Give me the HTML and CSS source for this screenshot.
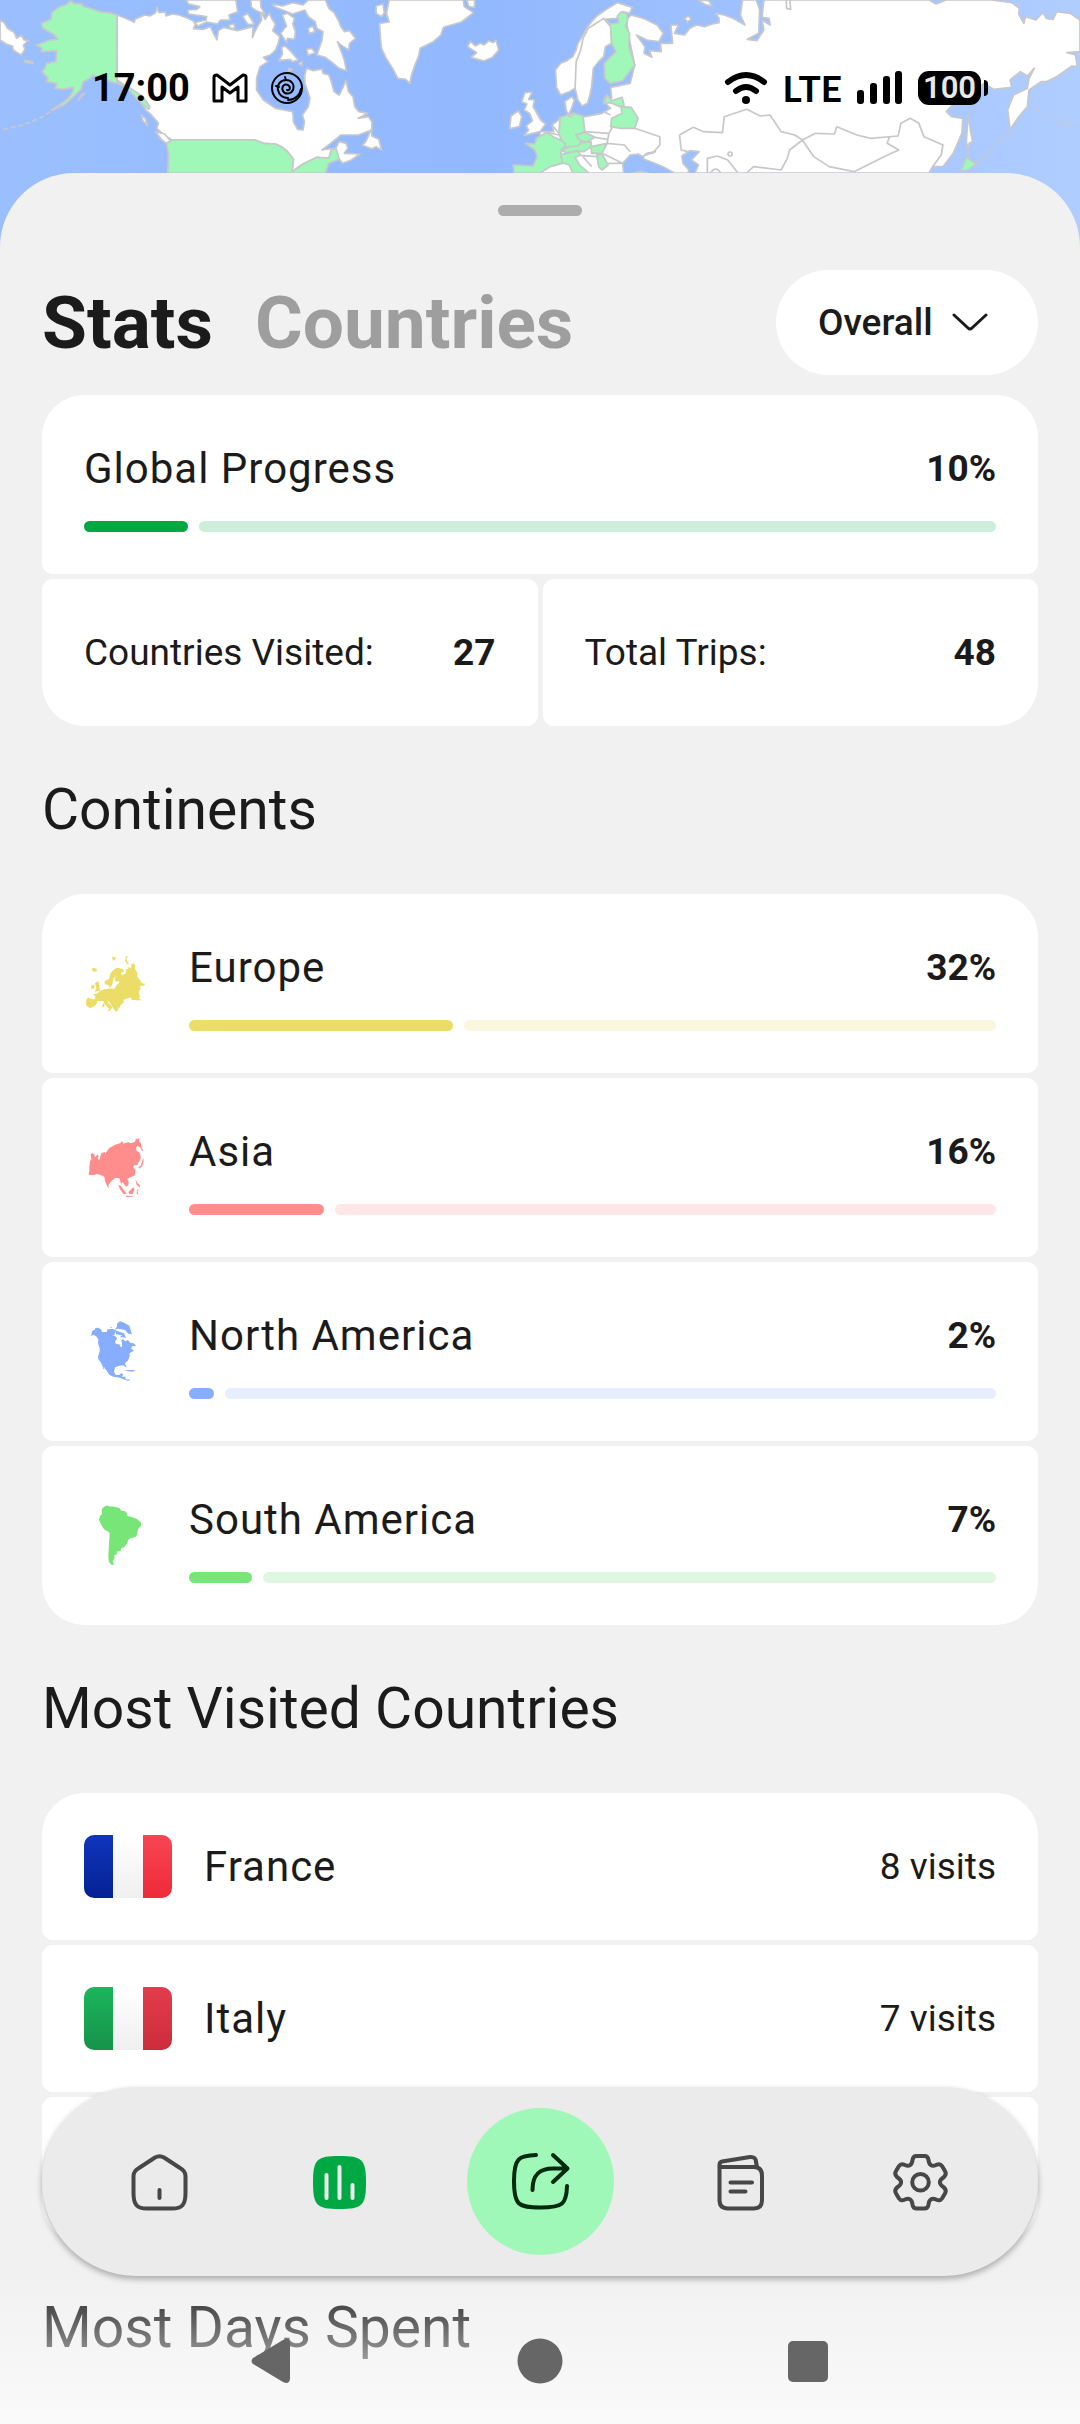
FILE: index.html
```html
<!DOCTYPE html>
<html lang="en">
<head>
<meta charset="utf-8">
<meta name="viewport" content="width=device-width, initial-scale=1">
<title>Travel Stats</title>
<link rel="stylesheet" href="styles.css">
</head>
<body>
<div class="app">
  <svg class="map" viewBox="0 0 3136 780" preserveAspectRatio="none" aria-hidden="true">
    <g class="land">
      <path d="M0 60L12 68L22 85L42 98L48 115L62 105L70 120L82 122L68 135L72 148L62 165L50 158L38 150L36 138L18 132L0 120Z"/>
      <path d="M340 45L365 55L390 67L392 58L420 45L435 48L452 38L456 22L462 38L480 36L482 48L500 42L520 45L545 55L560 62L568 72L562 86L590 88L612 80L615 90L630 120L634 92L650 82L690 92L712 86L735 80L733 112L740 95L750 75L760 60L755 30L770 58L782 40L790 58L800 72L792 92L812 110L808 130L800 150L785 165L765 172L778 185L755 200L745 235L745 270L765 300L800 325L850 335L852 365L864 388L880 390L884 365L878 345L895 320L900 295L885 250L885 225L890 205L910 212L935 207L938 220L955 225L962 245L970 275L985 285L998 258L1004 240L1012 275L1025 290L1030 320L1042 335L1068 340L1040 355L1070 350L1080 365L1080 390L1040 405L990 405L960 430L935 450L975 444L985 425L1005 430L1010 445L1000 460L1045 462L1020 480L995 490L985 478L955 476L920 472L880 492L848 515L852 478L835 455L820 442L800 432L765 430L740 420L500 420L480 408L455 385L460 370L440 345L425 332L400 295L370 262L340 240Z"/>
      <path d="M452 395L478 402L500 428L500 445L470 420ZM410 345L422 355L428 378L415 362Z"/>
      <path d="M1078 388L1080 408L1100 418L1108 450L1092 440L1080 446L1052 436L1062 425Z"/>
      <path d="M540 0L685 0L690 35L665 45L668 60L640 60L632 72L600 66L575 78L565 68L598 60L600 50L548 42L545 30L572 28L580 20L548 12Z"/>
      <path d="M728 0L756 0L758 22L770 42L745 32L730 22ZM705 50L718 40L728 55L738 72L720 74ZM665 75L680 72L682 84L668 85Z"/>
      <path d="M790 12L820 18L850 8L880 15L895 0L945 0L955 25L970 38L982 60L990 80L1000 95L1015 92L1032 115L1015 130L1012 150L990 135L980 125L1000 180L1006 212L985 205L965 188L945 172L920 165L935 120L938 95L920 85L915 65L895 50L885 30L850 42L800 22Z"/>
      <path d="M820 45L835 40L855 55L850 72L858 95L855 118L835 115L832 128L815 100L832 78ZM895 85L908 78L915 95L898 100ZM890 148L905 145L915 158L895 166Z"/>
      <path d="M818 142L828 138L845 155L866 180L850 185L842 178L810 182L820 162ZM838 205L848 208L840 215ZM868 190L878 185L876 198Z"/>
      <path d="M1130 0L1345 0L1348 20L1375 38L1340 66L1300 78L1288 82L1280 105L1258 125L1220 145L1215 170L1205 195L1195 225L1190 250L1178 238L1155 235L1140 205L1120 172L1108 145L1105 118L1102 70L1130 66L1122 40ZM1092 18L1112 12L1116 38L1108 50L1092 40ZM1355 0L1378 0L1378 22L1362 20Z"/>
      <path d="M1358 140L1366 124L1380 138L1395 130L1405 135L1420 122L1432 128L1440 120L1448 150L1430 172L1405 183L1368 172L1384 158Z"/>
      <path d="M1505 332L1515 350L1508 380L1480 386L1484 348ZM1524 278L1545 276L1535 298L1552 300L1548 320L1562 345L1570 360L1584 372L1568 395L1522 406L1535 390L1528 378L1546 362L1538 340L1522 330L1530 312L1515 305Z"/>
      <g transform="translate(1568 0)">
        <path d="M45 210L60 190L78 182L95 170L105 150L110 130L122 110L135 85L150 65L165 48L190 30L225 8L268 22L260 40L240 35L222 55L188 58L205 75L208 130L190 140L185 170L170 185L155 205L150 260L145 285L138 310L122 318L110 300L102 265L85 275L60 285L48 262ZM72 305L92 290L100 300L90 330L82 345L76 330Z"/>
        <path d="M250 60L265 45L300 55L340 75L358 100L345 125L310 120L280 105L305 140L302 160L325 172L318 152L352 155L350 130L385 130L380 75L402 75L390 100L420 105L435 85L455 75L478 80L500 72L520 68L520 55L510 40L535 45L560 55L595 75L582 45L588 0L628 0L638 30L635 100L602 118L630 122L650 90L645 60L668 75L665 55L645 52L650 0L1130 0L1150 12L1180 0L1310 0L1370 8L1392 25L1390 42L1405 70L1410 50L1440 60L1460 38L1470 55L1490 58L1500 35L1540 40L1568 60L1568 155L1530 158L1555 165L1560 200L1545 198L1500 230L1470 245L1455 245L1420 270L1415 320L1390 350L1365 388L1358 330L1375 285L1415 265L1420 235L1435 205L1415 228L1395 215L1365 240L1370 262L1318 268L1290 250L1250 275L1210 300L1180 335L1195 350L1228 355L1225 400L1200 460L1170 500L1140 500L1130 519L450 519L460 495L440 480L462 455L435 452L412 468L415 490L432 510L430 519L390 519L360 502L330 488L302 478L300 468L335 455L310 460L298 470L285 462L262 465L240 490L243 519L-75 519L-75 495L0 500L0 395L40 395L35 375L55 358L75 350L95 340L130 350L180 340L205 325L185 305L190 290L208 295L205 262L262 250L275 195L262 130Z"/>
        <path d="M420 55L432 48L438 58L428 66ZM460 0L490 2L500 18L480 14ZM715 0L725 0L728 28L716 25ZM1243 345L1250 390L1256 425L1246 430L1245 458L1238 425Z"/>
      </g>
    </g>
    <g class="visited">
      <path d="M340 45L318 38L290 35L270 28L240 18L238 12L215 10L205 2L192 14L170 22L150 38L148 58L120 70L125 85L158 105L168 118L145 120L132 125L105 135L122 145L120 155L165 152L162 185L135 190L130 205L122 215L140 235L135 245L165 250L160 265L185 268L212 262L212 275L198 295L182 308L150 330L185 316L215 288L235 268L242 245L262 235L270 225L300 238L345 252L375 262L415 290L435 320L432 328L405 305L372 268L340 245Z"/>
      <path d="M70 180L95 185L96 190L74 188ZM235 285L245 280L228 300Z"/>
      <path d="M500 420L740 420L765 430L800 432L820 442L835 455L852 478L848 515L880 492L920 472L955 474L962 448L976 446L985 478L955 490L945 519L487 519L490 465L483 430Z"/>
      <g transform="translate(1568 0)">
        <path d="M185 55L205 72L228 68L225 48L235 36L252 40L255 60L248 78L260 100L258 140L275 195L240 242L205 250L188 235L186 190L220 155L208 130L205 80Z"/>
        <path d="M58 352L80 345L90 350L98 340L125 348L130 395L105 405L120 425L110 440L68 442L55 400Z"/>
        <path d="M-42 430L-15 432L-10 415L20 397L38 410L60 420L75 432L60 460L65 490L30 500L0 519L-75 519L-78 495L-20 498L-8 470L-15 450Z"/>
        <path d="M60 450L85 440L110 438L120 428L148 425L150 440L128 455L95 455L80 460ZM105 405L130 397L160 412L135 426L115 420Z"/>
        <path d="M60 464L110 452L118 466L102 472L115 495L142 519L95 519L85 495L65 488ZM148 440L195 430L180 460L150 460ZM165 465L180 462L198 495L180 510L170 500Z"/>
        <path d="M185 310L195 285L208 302L238 292L244 315L232 320L205 308ZM205 380L208 355L238 340L235 320L265 322L285 355L275 385L235 385ZM1238 470L1265 492L1245 510L1218 514L1228 500ZM270 519L290 513L312 519Z"/>
      </g>
    </g>
    <g class="border" transform="translate(1568 0)">
      <path d="M102 265L105 185L118 150L125 115L140 85L160 72L185 55"/>
      <path d="M405 405L445 382L475 395L530 398L535 350L600 328L640 348L668 345L700 395L740 405L762 420L800 400L855 402L862 380L920 405L960 415L1040 408L1048 370L1075 355L1100 370L1115 410L1170 435L1165 465L1140 500M405 405L410 450L430 455M762 420L795 470L840 500L912 515L970 485L1020 460L1042 450L1008 430L1015 410M762 420L725 450L718 475L700 510L620 500L600 519M486 519V475L515 468L545 480L575 519M495 519Q510 495 525 519M546 462A6 6 0 1 0 558 462A6 6 0 1 0 546 462"/>
      <path d="M130 395L200 400L210 382M200 400L195 430L245 435L262 455M275 385L348 410L348 435L325 462M160 412L195 418M180 460L240 490M205 345L185 335M118 466L165 470M125 470L150 500M198 490H240M35 375L55 400M20 397L55 405"/>
      <path class="isles" d="M1265 492L1300 465L1340 420L1365 390M1440 330L1465 340M1505 368L1568 385"/>
    </g>
    <path class="isles" d="M10 388L70 374L120 352L150 332L185 314"/>
  </svg>

  <header class="status">
    <div class="status-group">
      <time class="clock">17:00</time>
      <svg class="mail" width="36" height="30" viewBox="0 0 36 30" aria-label="Mail"><path d="M2 4Q2 2 5 2L18 12L31 2Q34 2 34 4V28H26V14L18 20L10 14V28H2Z"/></svg>
      <svg class="swirl" width="34" height="34" viewBox="0 0 34 34" aria-label="Notification"><circle cx="17" cy="17" r="15"/><path d="M17 19C20 20 21 16 18 14C14 12 11 16 13 20C15 24 21 23 23 19C25 13 21 9 16 9C10 9 7 14 8 19C9 24 13 27 18 27M16 9L15 6M9 16L6 15M31 18C30 24 25 29 18 29"/></svg>
    </div>
    <div class="status-group status-right">
      <svg width="44" height="34" viewBox="0 0 44 34" aria-label="Wi-Fi"><g fill="none" stroke="#000" stroke-width="6" stroke-linecap="round"><path d="M4 11Q22 -3 40 11M12 20Q22 12 32 20"/></g><circle cx="22" cy="29" r="4"/></svg>
      <span class="network">LTE</span>
      <svg width="46" height="34" viewBox="0 0 46 34" aria-label="Signal"><rect x="0" y="19" width="7" height="14" rx="3"/><rect x="13" y="12" width="7" height="21" rx="3"/><rect x="26" y="5" width="7" height="28" rx="3"/><rect x="38" y="0" width="7" height="33" rx="3"/></svg>
      <div class="battery"><span class="level">100</span><span class="nub"></span></div>
    </div>
  </header>

  <main class="sheet">
    <div class="handle"></div>
    <div class="toolbar">
      <nav class="tabs">
        <button class="tab active" type="button">Stats</button>
        <button class="tab" type="button">Countries</button>
      </nav>
      <label class="filter">
        <select aria-label="Period"><option>Overall</option></select>
        <svg width="36" height="20" viewBox="0 0 36 20" aria-hidden="true"><path d="M2 2L16 15Q18 17 20 15L34 2"/></svg>
      </label>
    </div>

    <section class="cards">
      <div class="card">
        <div class="body">
          <div class="row"><span class="name">Global Progress</span><strong>10%</strong></div>
          <div class="bar green"><span class="fill" style="width:11.4%"></span><span class="track"></span></div>
        </div>
      </div>
      <div class="pair">
        <div class="card row"><span>Countries Visited:</span><strong>27</strong></div>
        <div class="card row"><span>Total Trips:</span><strong>48</strong></div>
      </div>
    </section>

    <h2>Continents</h2>
    <section class="cards">
      <div class="card">
        <svg class="shape" viewBox="72 96 189 189" fill="#ebdd68" aria-hidden="true"><path d="M78 250L79 240L85 232L92 236L104 238L106 230L100 222L112 220L120 213L135 207L140 208L150 205L162 207L170 195L178 188L176 182L168 186L164 178L168 168L160 176L158 190L152 203L144 195L134 192L134 184L148 176L150 162L160 150L170 143L185 146L192 150L190 157L183 158L186 166L198 160L197 148L204 148L205 142L214 144L213 134L220 130L226 138L225 148L232 158L232 170L240 180L246 190L256 191L252 197L240 197L242 206L236 215L240 230L236 234L244 241L228 241L215 239L212 232L200 236L190 240L192 247L182 255L178 265L173 262L175 270L168 276L158 262L150 250L142 240L144 248L157 261L150 272L142 272L148 266L134 253L130 243L112 243L110 252L100 260L90 265L80 258Z M105 190L115 182L118 198L120 212L103 215L109 206ZM93 198L103 193L103 206L94 206ZM96 143L110 146L110 155L98 154ZM156 112L167 110L166 118L159 123ZM199 108H203L199 118L207 133L201 132L195 121ZM127 252L133 250L133 262L128 262Z"/></svg>
        <div class="body">
          <div class="row"><span class="name">Europe</span><strong>32%</strong></div>
          <div class="bar yellow"><span class="fill" style="width:32.7%"></span><span class="track"></span></div>
        </div>
      </div>
      <div class="card">
        <svg class="shape" viewBox="72 648 189 189" fill="#ff8d8c" aria-hidden="true"><path d="M92 702L98 699L103 704L105 712L112 704L116 706L113 716L118 720L124 700L134 696L136 700L148 684L165 674L180 670L187 664L190 671L205 666L212 670L225 665L227 658L238 655L237 664L243 670L244 680L250 692L246 692L240 682L232 678L228 684L230 693L238 697L242 708L242 716L236 726L232 735L223 736L220 742L226 750L225 766L212 772L202 776L206 786L205 796L198 800L192 792L186 786L184 794L178 775L166 773L158 780L150 788L145 796L147 804L142 800L135 782L133 770L120 764L112 762L102 765L86 765L88 752L88 740L90 725L94 716ZM250 714L251 722L247 738L238 746L235 742L242 737L246 725ZM175 794L182 797L190 808L200 822L190 822L180 808ZM196 827L225 828L200 832ZM205 816L220 802L224 808L218 822L208 822ZM226 778L233 790L240 796L239 803L230 794ZM231 809L238 808L232 814L235 823L230 822Z"/></svg>
        <div class="body">
          <div class="row"><span class="name">Asia</span><strong>16%</strong></div>
          <div class="bar red"><span class="fill" style="width:16.7%"></span><span class="track"></span></div>
        </div>
      </div>
      <div class="card">
        <svg class="shape" viewBox="72 120 189 189" fill="#87adff" aria-hidden="true"><path d="M89 169L94 165L96 154L104 149L106 144L115 143L124 149L126 156L138 156L150 163L164 168L170 172L170 178L165 185L168 192L178 193L182 201L186 202L186 190L184 180L190 178L196 184L204 180L210 188L220 190L229 197L216 199L214 206L222 212L208 220L209 227L205 240L195 250L200 264L195 260L190 256L178 257L165 262L162 275L167 285L178 285L183 280L190 282L186 290L197 290L196 298L212 299L205 303L190 298L180 293L160 290L148 284L140 272L130 258L134 270L138 274L130 266L124 250L115 238L114 230L119 214L119 205L114 190L115 178L108 168L100 165ZM165 150L178 155L192 160L198 175L190 172L180 172L186 166L168 163ZM172 130L180 124L192 128L208 137L216 163L205 161L195 150L185 148L174 146L163 149L170 142ZM142 148L160 147L166 152L163 166L152 164L140 158ZM150 140L156 141L154 145ZM192 271L210 270L228 271L218 275L205 274Z"/></svg>
        <div class="body">
          <div class="row"><span class="name">North America</span><strong>2%</strong></div>
          <div class="bar blue"><span class="fill" style="width:3.1%"></span><span class="track"></span></div>
        </div>
      </div>
      <div class="card">
        <svg class="shape" viewBox="72 672 189 189" fill="#78e578" aria-hidden="true"><path d="M125 688L132 680L142 676L145 679L165 680L178 684L184 692L196 694L202 702L201 708L212 710L230 716L243 728L243 737L234 748L231 765L225 772L212 774L204 780L202 790L192 802L184 804L182 812L170 815L171 822L163 826L164 836L158 842L160 850L165 854L154 854L147 846L145 830L146 810L147 790L149 760L146 756L132 748L124 735L117 720L120 708L126 702Z"/></svg>
        <div class="body">
          <div class="row"><span class="name">South America</span><strong>7%</strong></div>
          <div class="bar lime"><span class="fill" style="width:7.8%"></span><span class="track"></span></div>
        </div>
      </div>
    </section>

    <h2>Most Visited Countries</h2>
    <section class="cards">
      <div class="card flagged">
        <span class="flag"><i class="navy"></i><i class="white"></i><i class="crimson"></i></span>
        <div class="row body"><span class="name">France</span><span>8 visits</span></div>
      </div>
      <div class="card flagged">
        <span class="flag"><i class="emerald"></i><i class="white"></i><i class="brick"></i></span>
        <div class="row body"><span class="name">Italy</span><span>7 visits</span></div>
      </div>
      <div class="card flagged"><div class="row body"></div></div>
    </section>

    <h2>Most Days Spent</h2>
  </main>

  <div class="scrim"></div>
  <nav class="dock">
    <button type="button" aria-label="Home"><svg viewBox="0 0 63 63"><path d="M27 7.500Q31.500 5 36 7.500L52 18Q57.500 21 57.500 26V43C57.500 55 54 58.500 44 58.500H19C9 58.500 5.500 55 5.500 43V26Q5.500 21 11 18ZM31.500 40V48"/></svg></button>
    <button type="button" aria-label="Stats"><svg viewBox="0 0 63 63"><path class="solid" d="M31.500 6C54 6 58 9 58 32.500C58 56 54 59 31.500 59C9 59 5 56 5 32.500C5 9 9 6 31.500 6Z"/><path class="cut" d="M18.500 25V48M31.500 17V48M44.500 35V48"/></svg></button>
    <button class="share" type="button" aria-label="Share"><svg viewBox="0 0 63 63"><path d="M27 5C10 5.500 5 8 5 31C5 55 9 57.500 31.500 57.500C54 57.500 57.500 54 58 36M44 5L58.500 18.500L44 32M58 18.500H44C30 18.500 23.500 25 23.500 40"/></svg></button>
    <button type="button" aria-label="Trips"><svg viewBox="0 0 63 63"><path d="M10.500 17H45Q53 17 53 26V50Q53 58.500 45 58.500H19Q10.500 58.500 10.500 50V15Q10.500 12 13 11.500L41 7Q47 6.500 47 12L48 17M21.500 32.500H43M21.500 41.500H36.500"/></svg></button>
    <button type="button" aria-label="Settings"><svg viewBox="0 0 63 63"><circle cx="31.500" cy="32.300" r="8.300"/><path d="M27.500 6H35.500Q39 6 39.500 10C40 15 43 17 47 15Q51 13 53 16L56 21Q58 24 55 27C49.500 30.500 49.500 34 55 37.500Q58 40.500 56 43.500L53 48.500Q51 51.500 47 49.500C43 47.500 40 49.500 39.500 54.500Q39 58.500 35.500 58.500H27.500Q24 58.500 23.500 54.500C23 49.500 20 47.500 16 49.500Q12 51.500 10 48.500L7 43.500Q5 40.500 8 37.500C13.500 34 13.500 30.500 8 27Q5 24 7 21L10 16Q12 13 16 15C20 17 23 15 23.500 10Q24 6 27.500 6Z"/></svg></button>
  </nav>
  <nav class="system">
    <button type="button" aria-label="Back"><svg viewBox="0 0 46 46"><path d="M4 20Q1 23 4 26L34 44Q40 47 41 41V5Q40 -1 34 2Z"/></svg></button>
    <button type="button" aria-label="Home screen"><svg viewBox="0 0 46 46"><circle cx="23" cy="23" r="22.500"/></svg></button>
    <button type="button" aria-label="Recent apps"><svg viewBox="0 0 46 46"><rect x="3" y="3" width="40" height="41" rx="5"/></svg></button>
  </nav>
</div>
</body>
</html>
```

FILE: styles.css
```css
* {
  box-sizing: border-box;
}

body {
  margin: 0;
  font-family: Roboto, "Noto Sans", sans-serif;
  color: #1c1b1b;
  background: #f1f1f1;
}

button,
select {
  margin: 0;
  padding: 0;
  border: 0;
  background: none;
  font: inherit;
  color: inherit;
}

svg {
  display: block;
  flex: none;
}

.app {
  position: relative;
  height: 100vh;
  overflow: hidden;
  background: linear-gradient(90deg, #9bbffe, #92b8fe 45%, #b0cdff);
}

/* World map behind the status bar */
.map {
  position: absolute;
  top: 0;
  left: 0;
  width: 100%;
  height: 260px;
}

.map path {
  stroke: #c6c8cb;
  stroke-width: 5;
  stroke-linejoin: round;
}

.land {
  fill: #fff;
}

.visited {
  fill: #9ff7b8;
}

.border,
.map .isles {
  fill: none;
}

.map .isles {
  stroke-dasharray: 14 8;
}

.status {
  position: relative;
  display: flex;
  justify-content: space-between;
  align-items: flex-start;
  height: 173px;
  padding: 66px 92px 0;
  color: #000;
}

.status-group {
  display: flex;
  align-items: center;
  height: 44px;
  gap: 22px;
}

.status-right {
  gap: 15px;
}

.clock {
  font-size: 38px;
  font-weight: 700;
  line-height: 42px;
}

.mail,
.swirl {
  fill: none;
  stroke: #000;
  stroke-width: 3;
  stroke-linejoin: round;
  stroke-linecap: round;
}

.swirl {
  stroke-width: 2;
}

.network {
  font-family: Lato, Roboto, sans-serif;
  font-size: 37px;
  font-weight: 700;
  line-height: 44px;
}

.battery {
  display: flex;
  align-items: center;
  gap: 3px;
}

.level {
  width: 63px;
  border-radius: 11px;
  background: #000;
  color: #e8e8e8;
  font-size: 31px;
  font-weight: 600;
  line-height: 34px;
  text-align: center;
}

.nub {
  width: 4px;
  height: 16px;
  border-radius: 0 4px 4px 0;
  background: #000;
}

/* Bottom sheet */
.sheet {
  position: relative;
  min-height: 100%;
  padding: 32px 42px 0;
  border-radius: 74px 74px 0 0;
  background: #f1f1f1;
  font-size: 37px;
}

.handle {
  width: 84px;
  height: 11px;
  margin: 0 auto 54px;
  border-radius: 6px;
  background: #adadad;
}

.toolbar {
  display: flex;
  justify-content: space-between;
  align-items: center;
  margin-bottom: 20px;
}

.tabs {
  display: flex;
  gap: 42px;
}

.tab {
  font-size: 73px;
  font-weight: 700;
  line-height: 84px;
  color: #9e9e9e;
}

.tab.active {
  color: #1c1b1b;
}

.filter {
  display: grid;
  align-items: center;
}

.filter select,
.filter svg {
  grid-area: 1 / 1;
}

.filter select {
  appearance: none;
  width: 262px;
  height: 105px;
  padding: 0 80px 0 42px;
  border-radius: 53px;
  background: #fff;
  font-weight: 500;
}

.filter svg {
  justify-self: end;
  margin-right: 50px;
  fill: none;
  stroke: #1c1b1b;
  stroke-width: 3;
  stroke-linecap: round;
  pointer-events: none;
}

h2 {
  margin: 0;
  padding: 42px 0;
  font-size: 57px;
  font-weight: 400;
  line-height: 84px;
}

.cards {
  display: flex;
  flex-direction: column;
  gap: 5px;
  border-radius: 42px;
  overflow: hidden;
}

.pair {
  display: grid;
  grid-template-columns: 1fr 1fr;
  gap: 5px;
}

.card {
  display: flex;
  align-items: center;
  gap: 42px;
  padding: 42px;
  border-radius: 11px;
  background: #fff;
}

.flagged {
  gap: 32px;
}

.body {
  flex: 1;
}

.row {
  display: flex;
  justify-content: space-between;
  align-items: center;
  min-height: 63px;
  line-height: 63px;
}

.name {
  font-size: 42px;
  letter-spacing: 1px;
}

strong {
  font-weight: 700;
}

.bar {
  display: flex;
  gap: 11px;
  height: 11px;
  margin-top: 21px;
}

.fill,
.track {
  border-radius: 6px;
  background: var(--tone);
}

.track {
  flex: 1;
  background: var(--soft);
}

.green {
  --tone: #00a843;
  --soft: #cdeedb;
}

.yellow {
  --tone: #ebdd68;
  --soft: #faf7de;
}

.red {
  --tone: #ff8d8c;
  --soft: #ffe7e7;
}

.blue {
  --tone: #87adff;
  --soft: #e7eeff;
}

.lime {
  --tone: #78e578;
  --soft: #e0f8e1;
}

.shape {
  width: 63px;
  height: 63px;
}

.flag {
  display: grid;
  grid-template-columns: repeat(3, 1fr);
  width: 88px;
  height: 63px;
  border-radius: 10px;
  overflow: hidden;
}

.navy {
  background: linear-gradient(#1035bd, #042293);
}

.white {
  background: linear-gradient(#fff, #efefef);
}

.crimson {
  background: linear-gradient(#f74553, #ef2a39);
}

.emerald {
  background: linear-gradient(#1cb65c, #16924a);
}

.brick {
  background: linear-gradient(#e43d4d, #cb2c3b);
}

/* Overlays at the foot of the screen */
.scrim {
  position: absolute;
  right: 0;
  bottom: 0;
  left: 0;
  height: 148px;
  background: linear-gradient(rgba(250, 250, 250, 0), #fafafa);
}

.dock {
  position: absolute;
  right: 42px;
  bottom: 148px;
  left: 42px;
  display: flex;
  justify-content: space-between;
  align-items: center;
  height: 189px;
  padding: 0 65px;
  border-radius: 95px;
  background: #ebebeb;
  box-shadow: 0 3px 6px rgba(0, 0, 0, 0.3);
}

.dock button {
  display: grid;
  place-items: center;
  width: 105px;
  height: 105px;
}

.dock svg {
  width: 63px;
  height: 63px;
  fill: none;
  stroke: #474747;
  stroke-width: 4;
  stroke-linecap: round;
  stroke-linejoin: round;
}

.dock .solid {
  fill: #00a843;
  stroke: none;
}

.dock .cut {
  stroke: #ebebeb;
}

.dock .share {
  width: 147px;
  height: 147px;
  border-radius: 50%;
  background: #9ff7b8;
}

.dock .share svg {
  stroke: #002a10;
}

.system {
  position: absolute;
  right: 0;
  bottom: 40px;
  left: 0;
  display: flex;
  justify-content: center;
  gap: 222px;
}

.system svg {
  width: 46px;
  height: 46px;
  fill: #666;
}
```
